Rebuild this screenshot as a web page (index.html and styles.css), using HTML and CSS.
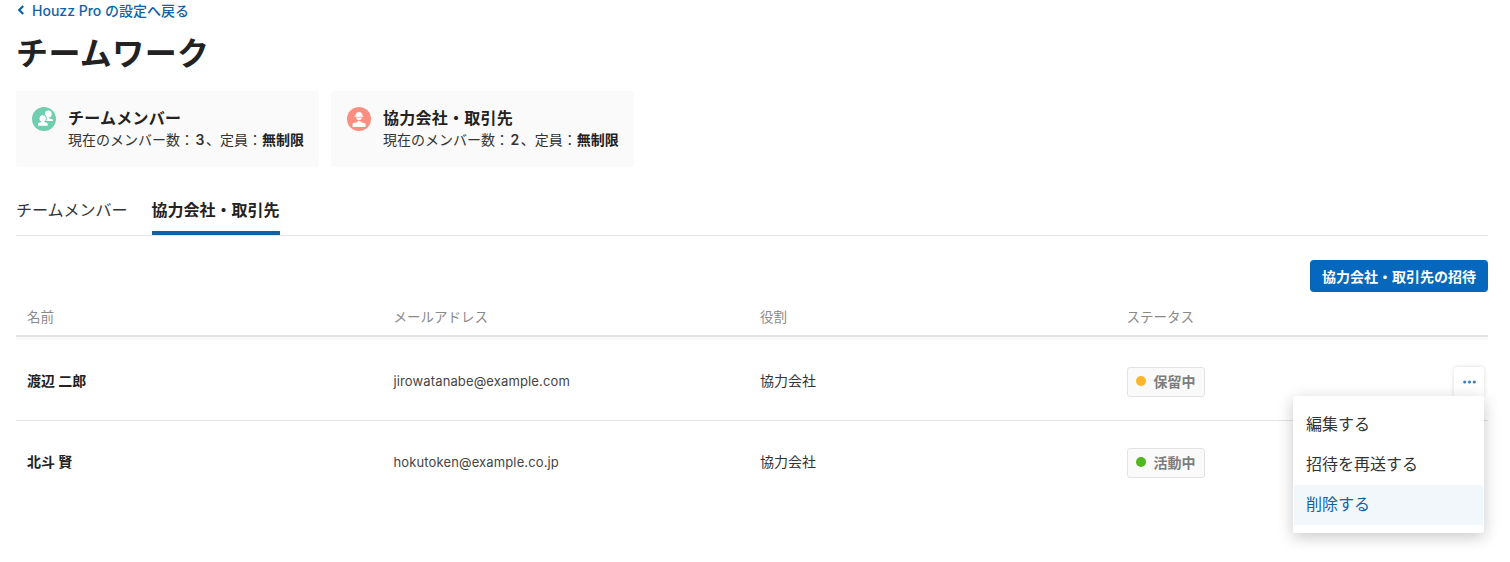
FILE: index.html
```html
<!DOCTYPE html>
<html lang="ja">
<head>
<meta charset="utf-8">
<title>チームワーク</title>
<link rel="stylesheet" href="styles.css">
</head>
<body>
<main class="page">
  <a class="back" href="#"><svg class="chev" width="8" height="10" viewBox="0 0 8 10"><path d="M6.200 1 2.200 5l4 4" fill="none" stroke="#0f62a8" stroke-width="2.200"/></svg><span>Houzz Pro の設定へ戻る</span></a>
  <h1 class="title">チームワーク</h1>
  <div class="cards">
    <div class="card">
      <svg class="cicon" width="24" height="24" viewBox="0 0 24 24"><circle cx="12" cy="12" r="12" fill="#6fceb0"/><circle cx="16.300" cy="7" r="3.400" fill="#fff"/><path d="M13 10h3.500v1l4.500 1.500v1.500h-8z" fill="#fff"/><circle cx="10.700" cy="11.500" r="3.800" fill="#fff" stroke="#6fceb0"/><path d="M9.200 14h3v1l3.500 1.200v2.600H6v-2.600l3.200-1.200z" fill="#fff"/></svg>
      <div><div class="ctitle">チームメンバー</div><div class="csub">現在のメンバー数：<span class="num">3</span>、定員：<b>無制限</b></div></div>
    </div>
    <div class="card">
      <svg class="cicon" width="24" height="24" viewBox="0 0 24 24"><circle cx="12" cy="12" r="12" fill="#f98f80"/><path d="M8.500 9c0-2.500 1.500-4 3.500-4s3.500 1.500 3.500 4z" fill="#fff"/><path d="M7.500 9.100h9v.8h-9z" fill="#fff"/><path d="M9.200 10.500h5.600c-.2 1.800-1.300 2.800-2.800 2.800s-2.600-1-2.800-2.800z" fill="#fff"/><path d="M10.500 14h3v1l5 1.500V20H5.500v-3.500l5-1.500z" fill="#fff"/></svg>
      <div><div class="ctitle">協力会社・取引先</div><div class="csub">現在のメンバー数：<span class="num">2</span>、定員：<b>無制限</b></div></div>
    </div>
  </div>
  <nav class="tabs"><a class="tab">チームメンバー</a><a class="tab active">協力会社・取引先</a></nav>
  <div class="actions"><button class="invite">協力会社・取引先の招待</button></div>
  <div class="row head"><div>名前</div><div>メールアドレス</div><div>役割</div><div>ステータス</div></div>
  <div class="row item first">
    <div class="name">渡辺 二郎</div><div class="mail">jirowatanabe@example.com</div><div class="role">協力会社</div>
    <div><span class="badge"><i class="dot amber"></i>保留中</span></div>
    <div class="more-wrap">
      <button class="more"><svg width="13" height="4" viewBox="0 0 13 4"><circle cx="1.700" cy="2" r="1.600"/><circle cx="6.500" cy="2" r="1.600"/><circle cx="11.300" cy="2" r="1.600"/></svg></button>
      <ul class="menu"><li>編集する</li><li>招待を再送する</li><li class="hot">削除する</li></ul>
    </div>
  </div>
  <div class="row item">
    <div class="name">北斗 賢</div><div class="mail">hokutoken@example.co.jp</div><div class="role">協力会社</div>
    <div><span class="badge"><i class="dot green"></i>活動中</span></div>
  </div>
</main>
</body>
</html>
```
FILE: styles.css
```css
* { box-sizing: border-box; }
html, body { margin: 0; background: #fff; }
body { font-family: Inter, "Noto Sans CJK JP", sans-serif; color: #222; height: 562px; overflow: hidden; }
.page { padding: 0 22px 0 16px; }
.back { display: flex; align-items: center; height: 20px; gap: 7px; color: #0f62a8; font-size: 14px; font-weight: 500; text-decoration: none; white-space: nowrap; }
.chev { margin-left: 1px; }
.title { margin: 0; padding-top: 11px; height: 71px; font-size: 32px; line-height: 46px; font-weight: 700; color: #222; letter-spacing: .4px; }
.cards { display: flex; gap: 12px; }
.card { display: flex; gap: 12px; width: 303px; height: 76px; padding: 16px 15px 0 16px; background: #fafafa; border-radius: 3px; }
.cicon { flex: none; }
.ctitle { font-size: 16px; line-height: 22px; font-weight: 700; letter-spacing: .25px; }
.csub { font-size: 14px; line-height: 22px; color: #333; white-space: nowrap; }
.csub b { color: #222; font-weight: 700; }
.num { padding: 0 1.500px; font-weight: 600; }
.tabs { display: flex; gap: 24px; height: 69px; padding-top: 25px; border-bottom: 1px solid #e3e3e3; }
.tab { height: 43px; font-size: 16px; line-height: 36.500px; color: #333; }
.tab.active { font-weight: 700; color: #222; border-bottom: 4px solid #0f62a8; }
.actions { display: flex; justify-content: flex-end; padding-top: 24px; }
.invite { width: 178px; height: 32px; border: 0; border-radius: 4px; background: #0568bd; color: #fff; font: 700 14px Inter, "Noto Sans CJK JP", sans-serif; }
.row { display: grid; grid-template-columns: repeat(4, 366.5px) 1fr; }
.row > div:not(.more-wrap) { padding-left: 11px; }
.head { height: 44px; margin-top: 1px; padding-top: 4px; align-items: center; font-size: 13.5px; color: #8a8a8a; border-bottom: 2px solid #e3e3e3; box-shadow: 0 3px 0 #fafafa; }
.item { position: relative; height: 81px; padding-top: 3px; align-items: center; font-size: 14px; border-bottom: 1px solid #e3e3e3; }
.item.first { margin-top: 3px; }
.item:last-child { border-bottom: 0; }
.name, .role { padding-bottom: 4px; }
.mail { padding-bottom: 2px; }
.name { font-weight: 700; color: #222; }
.mail { font-size: 13px; color: #444; letter-spacing: .13px; }
.role { color: #333; }
.badge { display: inline-flex; align-items: center; gap: 8px; height: 30px; width: 78px; padding: 0 0 2px 8px; border: 1px solid #e3e3e3; border-radius: 3px; background: #fafafa; font-size: 14px; font-weight: 700; color: #7d7d7d; vertical-align: middle; }
.dot { width: 10px; height: 10px; border-radius: 50%; }
.amber { background: #fdb52a; }
.green { background: #4fb81c; }
.more-wrap { position: absolute; right: 4px; top: 27px; width: 191px; height: 170px; }
.more { position: absolute; right: 0; top: 0; width: 30px; height: 30px; padding: 0; border: 0; background: #fff; box-shadow: 0 0 4px rgba(0,0,0,.15); border-radius: 3px; display: flex; align-items: center; justify-content: center; }
.more svg { fill: #3d7fbd; }
.menu { position: absolute; left: 0; top: 29px; width: 191px; margin: 0; padding: 9px 1px 8px; list-style: none; background: #fff; box-shadow: 0 4px 16px rgba(0,0,0,.22); border-radius: 2px; }
.menu li { height: 40px; padding: 0 12px; font-size: 16px; line-height: 38px; color: #333; }
.menu .hot { background: #f2f7fb; color: #0f62a8; }
```
